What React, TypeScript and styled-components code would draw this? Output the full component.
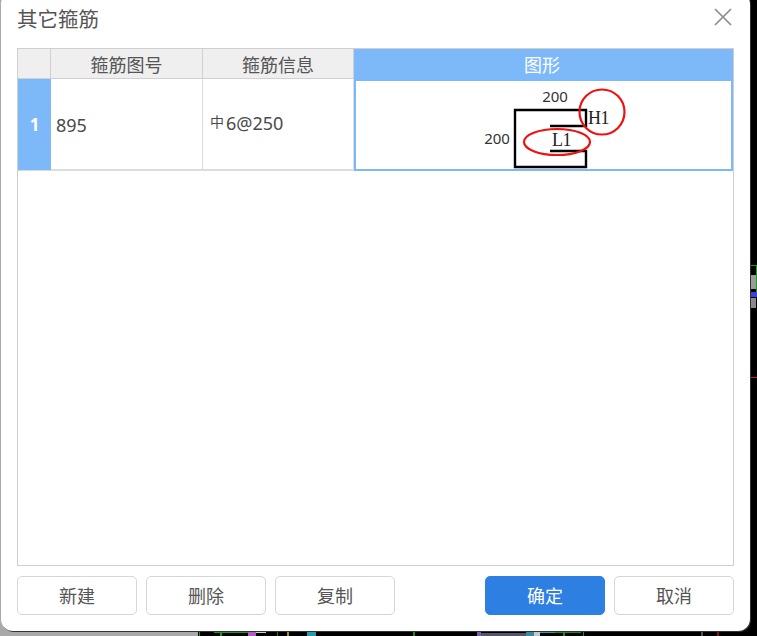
import React from 'react';
import styled, { createGlobalStyle } from 'styled-components';

const GlobalStyle = createGlobalStyle`
  html, body {
    margin: 0;
    padding: 0;
    height: 100%;
    overflow: hidden;
    background: #000;
  }
  #root {
    height: 100%;
  }
`;

const Desktop = styled.div`
  position: relative;
  width: 757px;
  height: 636px;
  overflow: hidden;
  background: #000;
  font-family: 'Noto Sans', 'Noto Sans CJK SC', sans-serif;
`;

const GreyStrip = styled.div`
  position: absolute;
  left: 0;
  top: 0;
  width: 198px;
  height: 636px;
  background: #a9a9a9;
`;

interface MarkProps {
  $x: number;
  $y: number;
  $w: number;
  $h: number;
  $c: string;
}

// bits of the CAD drawing which show behind the dialog
const CadMark = styled.i<MarkProps>`
  position: absolute;
  left: ${(p) => p.$x}px;
  top: ${(p) => p.$y}px;
  width: ${(p) => p.$w}px;
  height: ${(p) => p.$h}px;
  background: ${(p) => p.$c};
`;

const Dialog = styled.div`
  position: absolute;
  left: 1px;
  top: -8px;
  width: 749px;
  height: 639px;
  box-sizing: border-box;
  padding: 8px 16px 14px 16px;
  display: flex;
  flex-direction: column;
  background: #fff;
  border-radius: 12px;
  box-shadow: 1px 1px 0 #333;
`;

const TitleBar = styled.div`
  height: 48px;
  flex: none;
  display: flex;
  align-items: center;
  justify-content: space-between;
`;

const Title = styled.div`
  font-size: 20.5px;
  color: #555;
  margin-top: -13px;
`;

const CloseButton = styled.button`
  width: 18px;
  height: 18px;
  margin: -14px 2px 0 0;
  padding: 0;
  border: 0;
  background: none;
  svg {
    display: block;
  }
`;

const TableFrame = styled.div`
  flex: 1;
  border: 1px solid #cfcfcf;
  background: #fff;
`;

const Grid = styled.div`
  display: grid;
  grid-template-columns: 33px 152px 151px 1fr;
  grid-template-rows: 30px 92px;
`;

const HeadCell = styled.div<{ $active?: boolean }>`
  display: flex;
  align-items: center;
  justify-content: center;
  font-size: 18px;
  color: ${(p) => (p.$active ? '#fff' : '#555')};
  background: ${(p) => (p.$active ? '#7db8f9' : '#efefef')};
  padding-right: ${(p) => (p.$active ? '3px' : '0')};
  border-right: ${(p) => (p.$active ? '0' : '1px solid #d0d0d0')};
  border-bottom: ${(p) => (p.$active ? '0' : '1px solid #d0d0d0')};
`;

const RowHead = styled.div`
  display: flex;
  align-items: center;
  justify-content: center;
  font-size: 17px;
  font-weight: 700;
  color: #fff;
  background: #7db8f9;
  border-bottom: 1px solid #d8d8d8;
`;

const Cell = styled.div`
  display: flex;
  align-items: center;
  padding-left: 5px;
  font-size: 18px;
  color: #4a4a4a;
  border-right: 1px solid #dcdcdc;
  border-bottom: 2px solid #dcdcdc;
`;

const RowNumber = styled.span`
  margin-top: 2px;
`;

const RebarInfo = styled.span`
  margin: -2px 0 0 2px;
`;

const RebarGlyph = styled.span`
  font-size: 14px;
  position: relative;
  top: -3px;
  margin-right: 2px;
`;

const ShapeCell = styled.div`
  border: 2px solid #7db8f9;
  background: #fff;
  svg {
    display: block;
  }
`;

const ButtonRow = styled.div`
  flex: none;
  display: flex;
  align-items: center;
  gap: 9px;
  margin-top: 10px;
  margin-bottom: 2px;
`;

const Spacer = styled.div`
  flex: 1;
`;

const DialogButton = styled.button<{ $primary?: boolean }>`
  width: 120px;
  height: 39px;
  padding: 0 0 2px;
  box-sizing: border-box;
  border-radius: 5px;
  border: 1px solid ${(p) => (p.$primary ? '#2d80e2' : '#d6d6d6')};
  background: ${(p) => (p.$primary ? '#2d80e2' : '#fff')};
  color: ${(p) => (p.$primary ? '#fff' : '#555')};
  font-family: inherit;
  font-size: 18px;
`;

const ShapeText = styled.text`
  font-family: 'Noto Sans', sans-serif;
  font-size: 15px;
  fill: #333;
`;

const LabelText = styled.text`
  font-family: 'Liberation Serif', serif;
  font-size: 18px;
  letter-spacing: -0.5px;
  fill: #222;
`;

const cadMarks: MarkProps[] = [
  { $x: 199, $y: 631, $w: 1, $h: 5, $c: '#16a016' },
  { $x: 214, $y: 632, $w: 46, $h: 1, $c: '#1f9a1f' },
  { $x: 220, $y: 631, $w: 2, $h: 5, $c: '#1f9a1f' },
  { $x: 248, $y: 632, $w: 8, $h: 4, $c: '#b060b8' },
  { $x: 256, $y: 632, $w: 10, $h: 1, $c: '#cfcfcf' },
  { $x: 277, $y: 632, $w: 1, $h: 4, $c: '#1f7a1f' },
  { $x: 287, $y: 632, $w: 2, $h: 4, $c: '#a89020' },
  { $x: 307, $y: 632, $w: 9, $h: 4, $c: '#2a9aa8' },
  { $x: 413, $y: 631, $w: 2, $h: 5, $c: '#1f8a1f' },
  { $x: 477, $y: 632, $w: 4, $h: 4, $c: '#7a5fa8' },
  { $x: 481, $y: 633, $w: 45, $h: 3, $c: '#55556a' },
  { $x: 526, $y: 632, $w: 8, $h: 4, $c: '#3a8a9a' },
  { $x: 534, $y: 632, $w: 6, $h: 4, $c: '#c8c8c8' },
  { $x: 540, $y: 632, $w: 15, $h: 1, $c: '#2aa0b0' },
  { $x: 555, $y: 632, $w: 26, $h: 1, $c: '#1f8a1f' },
  { $x: 563, $y: 632, $w: 2, $h: 4, $c: '#1f8a1f' },
  { $x: 583, $y: 632, $w: 1, $h: 4, $c: '#1f8a1f' },
  { $x: 701, $y: 632, $w: 2, $h: 4, $c: '#555' },
  { $x: 717, $y: 632, $w: 2, $h: 4, $c: '#8a1515' },
  { $x: 751, $y: 265, $w: 6, $h: 1, $c: '#1f9a1f' },
  { $x: 756, $y: 265, $w: 1, $h: 32, $c: '#1f9a1f' },
  { $x: 751, $y: 275, $w: 5, $h: 14, $c: '#9a9a9a' },
  { $x: 751, $y: 292, $w: 6, $h: 5, $c: '#4040e0' },
  { $x: 751, $y: 298, $w: 5, $h: 10, $c: '#8a8a8a' },
  { $x: 751, $y: 377, $w: 6, $h: 1, $c: '#c02020' },
];

const App: React.FC = () => {
  return (
    <Desktop>
      <GlobalStyle />
      <GreyStrip />
      {cadMarks.map((m) => (
        <CadMark key={`${m.$x}-${m.$y}`} {...m} />
      ))}
      <Dialog>
        <TitleBar>
          <Title>其它箍筋</Title>
          <CloseButton aria-label="关闭">
            <svg width="18" height="18" viewBox="0 0 18 18">
              <path d="M1 1 L17 17 M17 1 L1 17" stroke="#8c8c8c" strokeWidth="1.7" fill="none" />
            </svg>
          </CloseButton>
        </TitleBar>
        <TableFrame>
          <Grid>
            <HeadCell />
            <HeadCell>箍筋图号</HeadCell>
            <HeadCell>箍筋信息</HeadCell>
            <HeadCell $active>图形</HeadCell>
            <RowHead>1</RowHead>
            <Cell>
              <RowNumber>895</RowNumber>
            </Cell>
            <Cell>
              <RebarInfo>
                <RebarGlyph>中</RebarGlyph>6@250
              </RebarInfo>
            </Cell>
            <ShapeCell>
              <svg width="374" height="88" viewBox="356 81 374 88">
                <path
                  d="M550 126 H586 V110 H515 V167 H586 V151 H550"
                  fill="none"
                  stroke="#000"
                  strokeWidth="2.4"
                />
                <ShapeText x="555" y="101.5" textAnchor="middle">200</ShapeText>
                <ShapeText x="497" y="143.5" textAnchor="middle">200</ShapeText>
                <LabelText x="588" y="124">H1</LabelText>
                <LabelText x="552" y="146">L1</LabelText>
                <circle cx="602" cy="112" r="22.5" fill="none" stroke="#f01010" strokeWidth="2.2" />
                <ellipse cx="557" cy="142" rx="33" ry="13" fill="none" stroke="#f01010" strokeWidth="2.2" />
              </svg>
            </ShapeCell>
          </Grid>
        </TableFrame>
        <ButtonRow>
          <DialogButton>新建</DialogButton>
          <DialogButton>删除</DialogButton>
          <DialogButton>复制</DialogButton>
          <Spacer />
          <DialogButton $primary>确定</DialogButton>
          <DialogButton>取消</DialogButton>
        </ButtonRow>
      </Dialog>
    </Desktop>
  );
};

export default App;
